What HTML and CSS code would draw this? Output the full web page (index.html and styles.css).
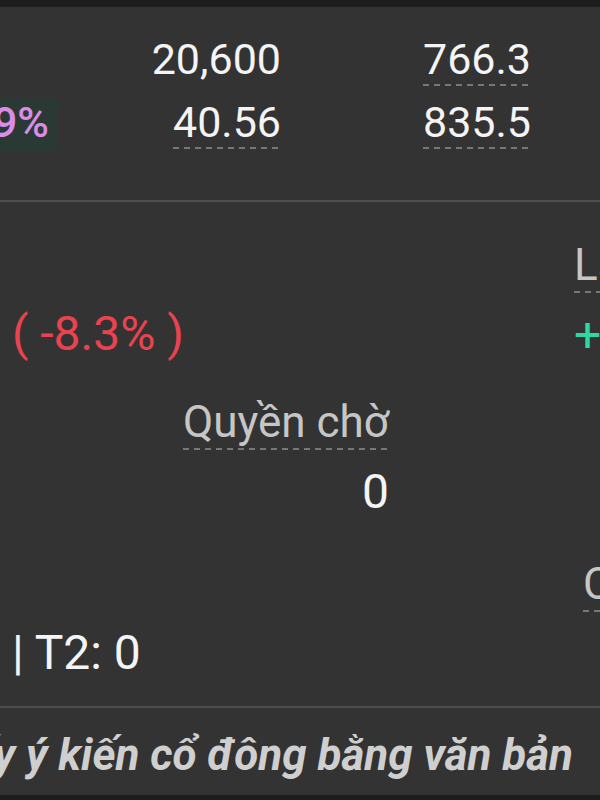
FILE: index.html
```html
<!DOCTYPE html>
<html lang="vi">
<head>
<meta charset="UTF-8" />
<meta name="viewport" content="width=device-width, initial-scale=1" />
<title>Chi tiết mã</title>
<link rel="stylesheet" href="styles.css">
</head>
<body>

<div class="statusbar"></div>

<section class="quote">
  <div class="cell"></div>
  <div class="cell num">20,600</div>
  <div class="cell num"><span class="dash">766.3</span></div>

  <div class="cell change"><span class="pill">+1.49%</span></div>
  <div class="cell num"><span class="dash">40.56</span></div>
  <div class="cell num"><span class="dash">835.5</span></div>
</section>

<section class="detail">
  <!-- row 1 -->
  <div class="field left">
    <div class="value down">( -8.3% )</div>
  </div>
  <div class="field mid"></div>
  <div class="field far">
    <div class="label"><span class="dash">Lãi/lỗ</span></div>
    <div class="value up">+1,250,000</div>
  </div>

  <!-- row 2 -->
  <div class="field left"></div>
  <div class="field mid">
    <div class="label"><span class="dash">Quyền chờ</span></div>
    <div class="value">0</div>
  </div>
  <div class="field far"></div>

  <!-- row 3 -->
  <div class="field left">
    <div class="value">| T2: 0</div>
  </div>
  <div class="field mid"></div>
  <div class="field far inset">
    <div class="label"><span class="dash">Cổ tức</span></div>
  </div>
</section>

<div class="notice">
  <span class="notice-text">Lấy ý kiến cổ đông bằng văn bản</span>
</div>

<div class="navbar"></div>

</body>
</html>
```

FILE: styles.css
```css
body {
  margin: 0;
  width: 600px;
  height: 800px;
  overflow: hidden;
  background: #333;
  color: #f4f4f4;
  font-family: Roboto, 'Liberation Sans', sans-serif;
}
.statusbar {
  height: 7px;
  background: #1d1d1d;
}
.navbar {
  height: 5px;
  background: #1d1d1d;
}

/* dashed underline under tappable numbers/labels */
.dash {
  display: inline-block;
  padding-bottom: 6px;
  background: repeating-linear-gradient(to right, #777 0 6px, transparent 6px 11px) left bottom / 100% 2px no-repeat;
}

/* price block */
.quote {
  box-sizing: border-box;
  height: 195px;
  padding-top: 31px;
  display: grid;
  grid-template-columns: 58px 223px 250px;
  grid-template-rows: 48px 48px;
  row-gap: 15px;
  align-items: start;
  border-bottom: 2px solid #4e4e4e;
}
.cell {
  font-size: 43px;
  line-height: 42px;
  white-space: nowrap;
}
.num {
  text-align: right;
}
.change {
  display: flex;
  justify-content: flex-end;
}
.pill {
  flex-shrink: 0;
  margin-top: -4px;
  padding: 4px 9px 9px 12px;
  border-radius: 6px;
  background: #2a3934;
  color: #d98ce8;
  font-weight: 500;
}

/* info grid */
.detail {
  box-sizing: border-box;
  height: 506px;
  padding-top: 41px;
  display: grid;
  grid-template-columns: 150px 239px 1fr;
  grid-template-rows: 157px 162px 1fr;
  border-bottom: 2px solid #4e4e4e;
}
.field {
  white-space: nowrap;
}
.field.left {
  padding-left: 12px;
}
.field.mid {
  text-align: right;
}
.field.far {
  padding-left: 185px;
}
.field.far.inset {
  padding-left: 194px;
}
.label {
  font-size: 44px;
  line-height: 44px;
  color: #c6c6c6;
}
.value {
  margin-top: 18px;
  font-size: 48px;
  line-height: 48px;
}
.field.left .value {
  margin-top: 67px;
}
.value.down {
  color: #e8434f;
}
.value.up {
  color: #2fd7a1;
}

/* notice line */
.notice {
  height: 87px;
  display: flex;
  justify-content: flex-end;
  align-items: center;
  padding-right: 27px;
  white-space: nowrap;
}
.notice-text {
  flex-shrink: 0;
  padding-top: 6px;
  font-size: 44px;
  font-weight: bold;
  font-style: italic;
  color: #cfcfcf;
}
```
